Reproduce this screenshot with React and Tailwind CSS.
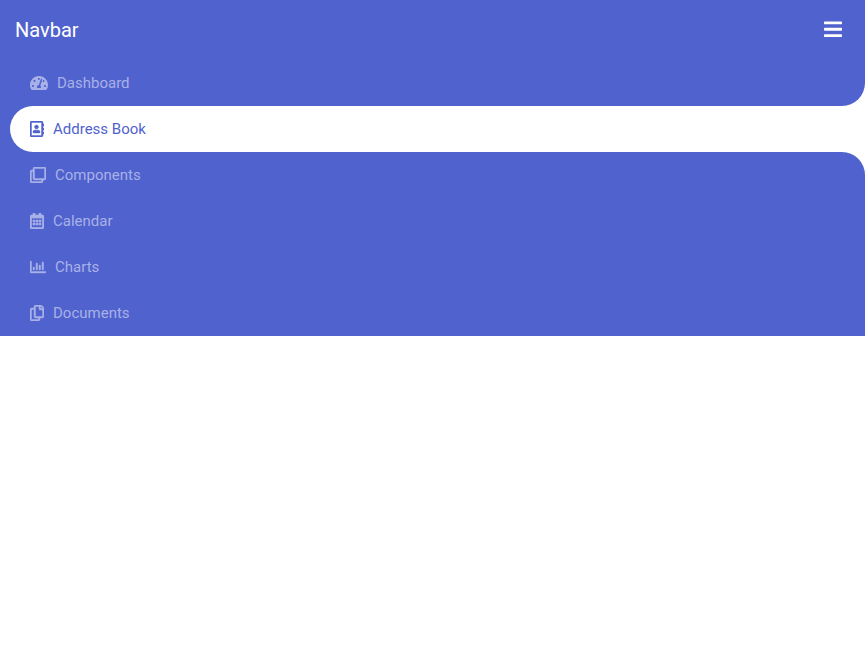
import React from 'react';
import { FaBars, FaTachometerAlt, FaRegAddressBook, FaRegClone, FaRegCalendarAlt, FaRegChartBar, FaRegCopy } from 'react-icons/fa';

const items = [
  { label: 'Dashboard', icon: FaTachometerAlt, iconClass: 'w-[18px]' },
  { label: 'Address Book', icon: FaRegAddressBook, iconClass: 'w-[14px] [stroke-width:14px]', active: true },
  { label: 'Components', icon: FaRegClone, iconClass: 'w-[16px] [stroke-width:14px]' },
  { label: 'Calendar', icon: FaRegCalendarAlt, iconClass: 'w-[14px] [stroke-width:22px]' },
  { label: 'Charts', icon: FaRegChartBar, iconClass: 'w-[16px] [stroke-width:14px]' },
  { label: 'Documents', icon: FaRegCopy, iconClass: 'w-[14px] [stroke-width:14px]' },
];

const App = () => {
  const activeIndex = items.findIndex((item) => item.active);

  return (
    <div className="min-h-screen bg-white font-['Roboto',sans-serif] subpixel-antialiased">
      <nav className="bg-[#5062ce]">
        <div className="flex h-[60px] items-center justify-between pl-[15px] pr-[23px]">
          <span className="text-[20px] text-white">Navbar</span>
          <FaBars className="mb-[2px] h-[20.5px] w-[18px] text-white" />
        </div>
        <ul className="bg-white">
          {items.map((item, i) => {
            const Icon = item.icon;
            if (item.active) {
              return (
                <li key={item.label} className="bg-[#5062ce] pl-[10px]">
                  <a className="flex h-[46px] items-center gap-[9px] rounded-l-[23px] bg-white pl-[20px] text-[15px] text-[#5062ce]">
                    <Icon className={`h-[16px] shrink-0 ${item.iconClass}`} />
                    {item.label}
                  </a>
                </li>
              );
            }
            let corner = '';
            if (i === activeIndex - 1) corner = 'rounded-br-[23px]';
            if (i === activeIndex + 1) corner = 'rounded-tr-[23px]';
            return (
              <li key={item.label}>
                <a className={`flex h-[46px] items-center gap-[9px] bg-[#5062ce] pl-[30px] text-[15px] text-[#a8b1e7] ${corner}`}>
                  <Icon className={`h-[16px] shrink-0 ${item.iconClass}`} />
                  {item.label}
                </a>
              </li>
            );
          })}
        </ul>
      </nav>
    </div>
  );
};

export default App;
